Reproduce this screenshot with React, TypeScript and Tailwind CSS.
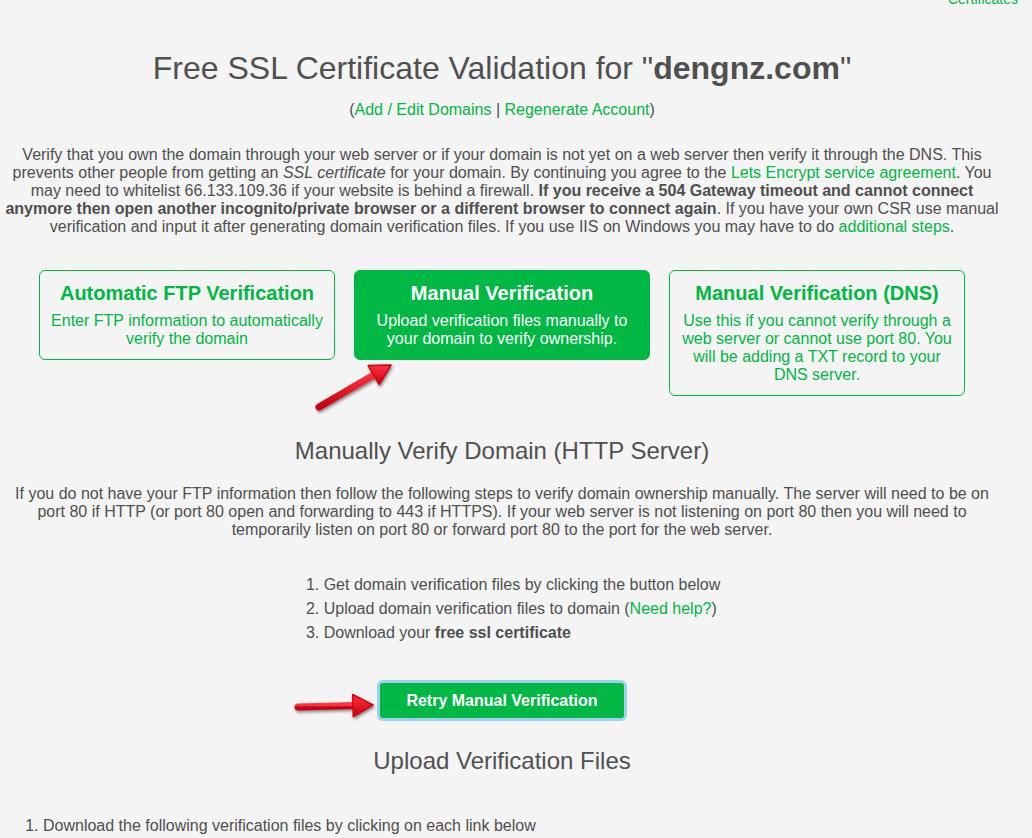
import React from 'react'

const green = 'text-[#00b843]'

function Arrow({ className, x1, y1, x2, y2 }: { className: string; x1: number; y1: number; x2: number; y2: number }) {
  // red marker arrow drawn in its own box
  const dx = x2 - x1
  const dy = y2 - y1
  const len = Math.sqrt(dx * dx + dy * dy)
  const ux = dx / len
  const uy = dy / len
  const bx = x2 - ux * 20
  const by = y2 - uy * 20
  const px = -uy
  const py = ux
  const head = `${x2},${y2} ${bx + px * 11},${by + py * 11} ${bx - px * 11},${by - py * 11}`
  return (
    <svg className={className} width="110" height="70" viewBox="0 0 110 70" style={{ filter: 'drop-shadow(1px 2px 1.5px rgba(0,0,0,0.45))' }}>
      <defs>
        <linearGradient id={`g${x1}${y1}`} x1="0" y1="0" x2="0" y2="1">
          <stop offset="0" stopColor="#ff3340" />
          <stop offset="1" stopColor="#c8000f" />
        </linearGradient>
      </defs>
      <line x1={x1} y1={y1} x2={bx + ux * 2} y2={by + uy * 2} stroke={`url(#g${x1}${y1})`} strokeWidth="7" strokeLinecap="round" />
      <polygon points={head} fill={`url(#g${x1}${y1})`} strokeLinejoin="round" stroke="#d8000f" strokeWidth="1.5" />
    </svg>
  )
}

export default function App() {
  return (
    <div className="min-h-[838px] bg-[#f4f4f4] text-[#4f4f4f] font-['Liberation_Sans',Arial,sans-serif] overflow-hidden">
      <div className="relative w-[1004px]">
        {/* cut off nav */}
        <div className="h-[6px] overflow-hidden flex justify-end items-end w-[1032px] pr-[14px]">
          <span className={`text-[14px] leading-[16px] -mb-[1px] ${green}`}>Certificates</span>
        </div>

        <h1 className="mt-[44px] text-center text-[32px] leading-[36px] text-[#505050]">
          Free SSL Certificate Validation for "<b>dengnz.com</b>"
        </h1>

        <div className="mt-[15px] text-center text-[16px] leading-[18px]">
          (<a className={green}>Add / Edit Domains</a> | <a className={green}>Regenerate Account</a>)
        </div>

        <p className="mt-[27px] text-center text-[16px] leading-[18px] whitespace-nowrap">
          Verify that you own the domain through your web server or if your domain is not yet on a web server then verify it through the DNS. This
          <br />
          prevents other people from getting an <i>SSL certificate</i> for your domain. By continuing you agree to the{' '}
          <a className={green}>Lets Encrypt service agreement</a>. You
          <br />
          may need to whitelist 66.133.109.36 if your website is behind a firewall. <b>If you receive a 504 Gateway timeout and cannot connect</b>
          <br />
          <b>anymore then open another incognito/private browser or a different browser to connect again</b>. If you have your own CSR use manual
          <br />
          verification and input it after generating domain verification files. If you use IIS on Windows you may have to do{' '}
          <a className={green}>additional steps</a>.
        </p>

        {/* verification methods */}
        <div className="mt-[34px] flex justify-center items-start gap-[19px]">
          <div className="w-[296px] border border-[#00b843] rounded-[6px] px-1 pt-[10px] pb-[11px] text-center text-[#00b843]">
            <div className="text-[20px] leading-6 font-bold mb-[7px]">Automatic FTP Verification</div>
            <div className="text-[16px] leading-[18px]">Enter FTP information to automatically verify the domain</div>
          </div>
          <div className="w-[296px] border border-[#00b843] bg-[#00b843] rounded-[6px] px-1 pt-[10px] pb-[11px] text-center text-white">
            <div className="text-[20px] leading-6 font-bold mb-[7px]">Manual Verification</div>
            <div className="text-[16px] leading-[18px]">Upload verification files manually to your domain to verify ownership.</div>
          </div>
          <div className="w-[296px] border border-[#00b843] rounded-[6px] px-[6px] pt-[10px] pb-[11px] text-center text-[#00b843]">
            <div className="text-[20px] leading-6 font-bold mb-[7px]">Manual Verification (DNS)</div>
            <div className="text-[16px] leading-[18px]">Use this if you cannot verify through a web server or cannot use port 80. You will be adding a TXT record to your DNS server.</div>
          </div>
        </div>

        <h2 className="mt-[41px] text-center text-[24px] leading-[28px] text-[#505050]">Manually Verify Domain (HTTP Server)</h2>

        <p className="mt-[20px] text-center text-[16px] leading-[18px] whitespace-nowrap">
          If you do not have your FTP information then follow the following steps to verify domain ownership manually. The server will need to be on
          <br />
          port 80 if HTTP (or port 80 open and forwarding to 443 if HTTPS). If your web server is not listening on port 80 then you will need to
          <br />
          temporarily listen on port 80 or forward port 80 to the port for the web server.
        </p>

        <div className="mt-[34px] flex justify-center">
          <ol className="list-decimal pl-10 text-left text-[16px] leading-6">
            <li>Get domain verification files by clicking the button below</li>
            <li>
              Upload domain verification files to domain (<a className={green}>Need help?</a>)
            </li>
            <li>
              Download your <b>free ssl certificate</b>
            </li>
          </ol>
        </div>

        <div className="mt-[38px] flex justify-center">
          <button className="w-[244px] h-[35px] bg-[#00b843] text-white font-bold text-[16px] rounded-[3px] ring-[3px] ring-[#9fd0f4]">
            Retry Manual Verification
          </button>
        </div>

        <h2 className="mt-[29px] text-center text-[24px] leading-[28px] text-[#505050]">Upload Verification Files</h2>

        <ol className="mt-[39px] list-decimal pl-[43px] text-[16px] leading-6">
          <li>Download the following verification files by clicking on each link below</li>
        </ol>

        <Arrow className="absolute left-[305px] top-[350px]" x1={14} y1={57} x2={86} y2={15} />
        <Arrow className="absolute left-[285px] top-[672px]" x1={13} y1={35} x2={88} y2={33} />
      </div>
    </div>
  )
}
